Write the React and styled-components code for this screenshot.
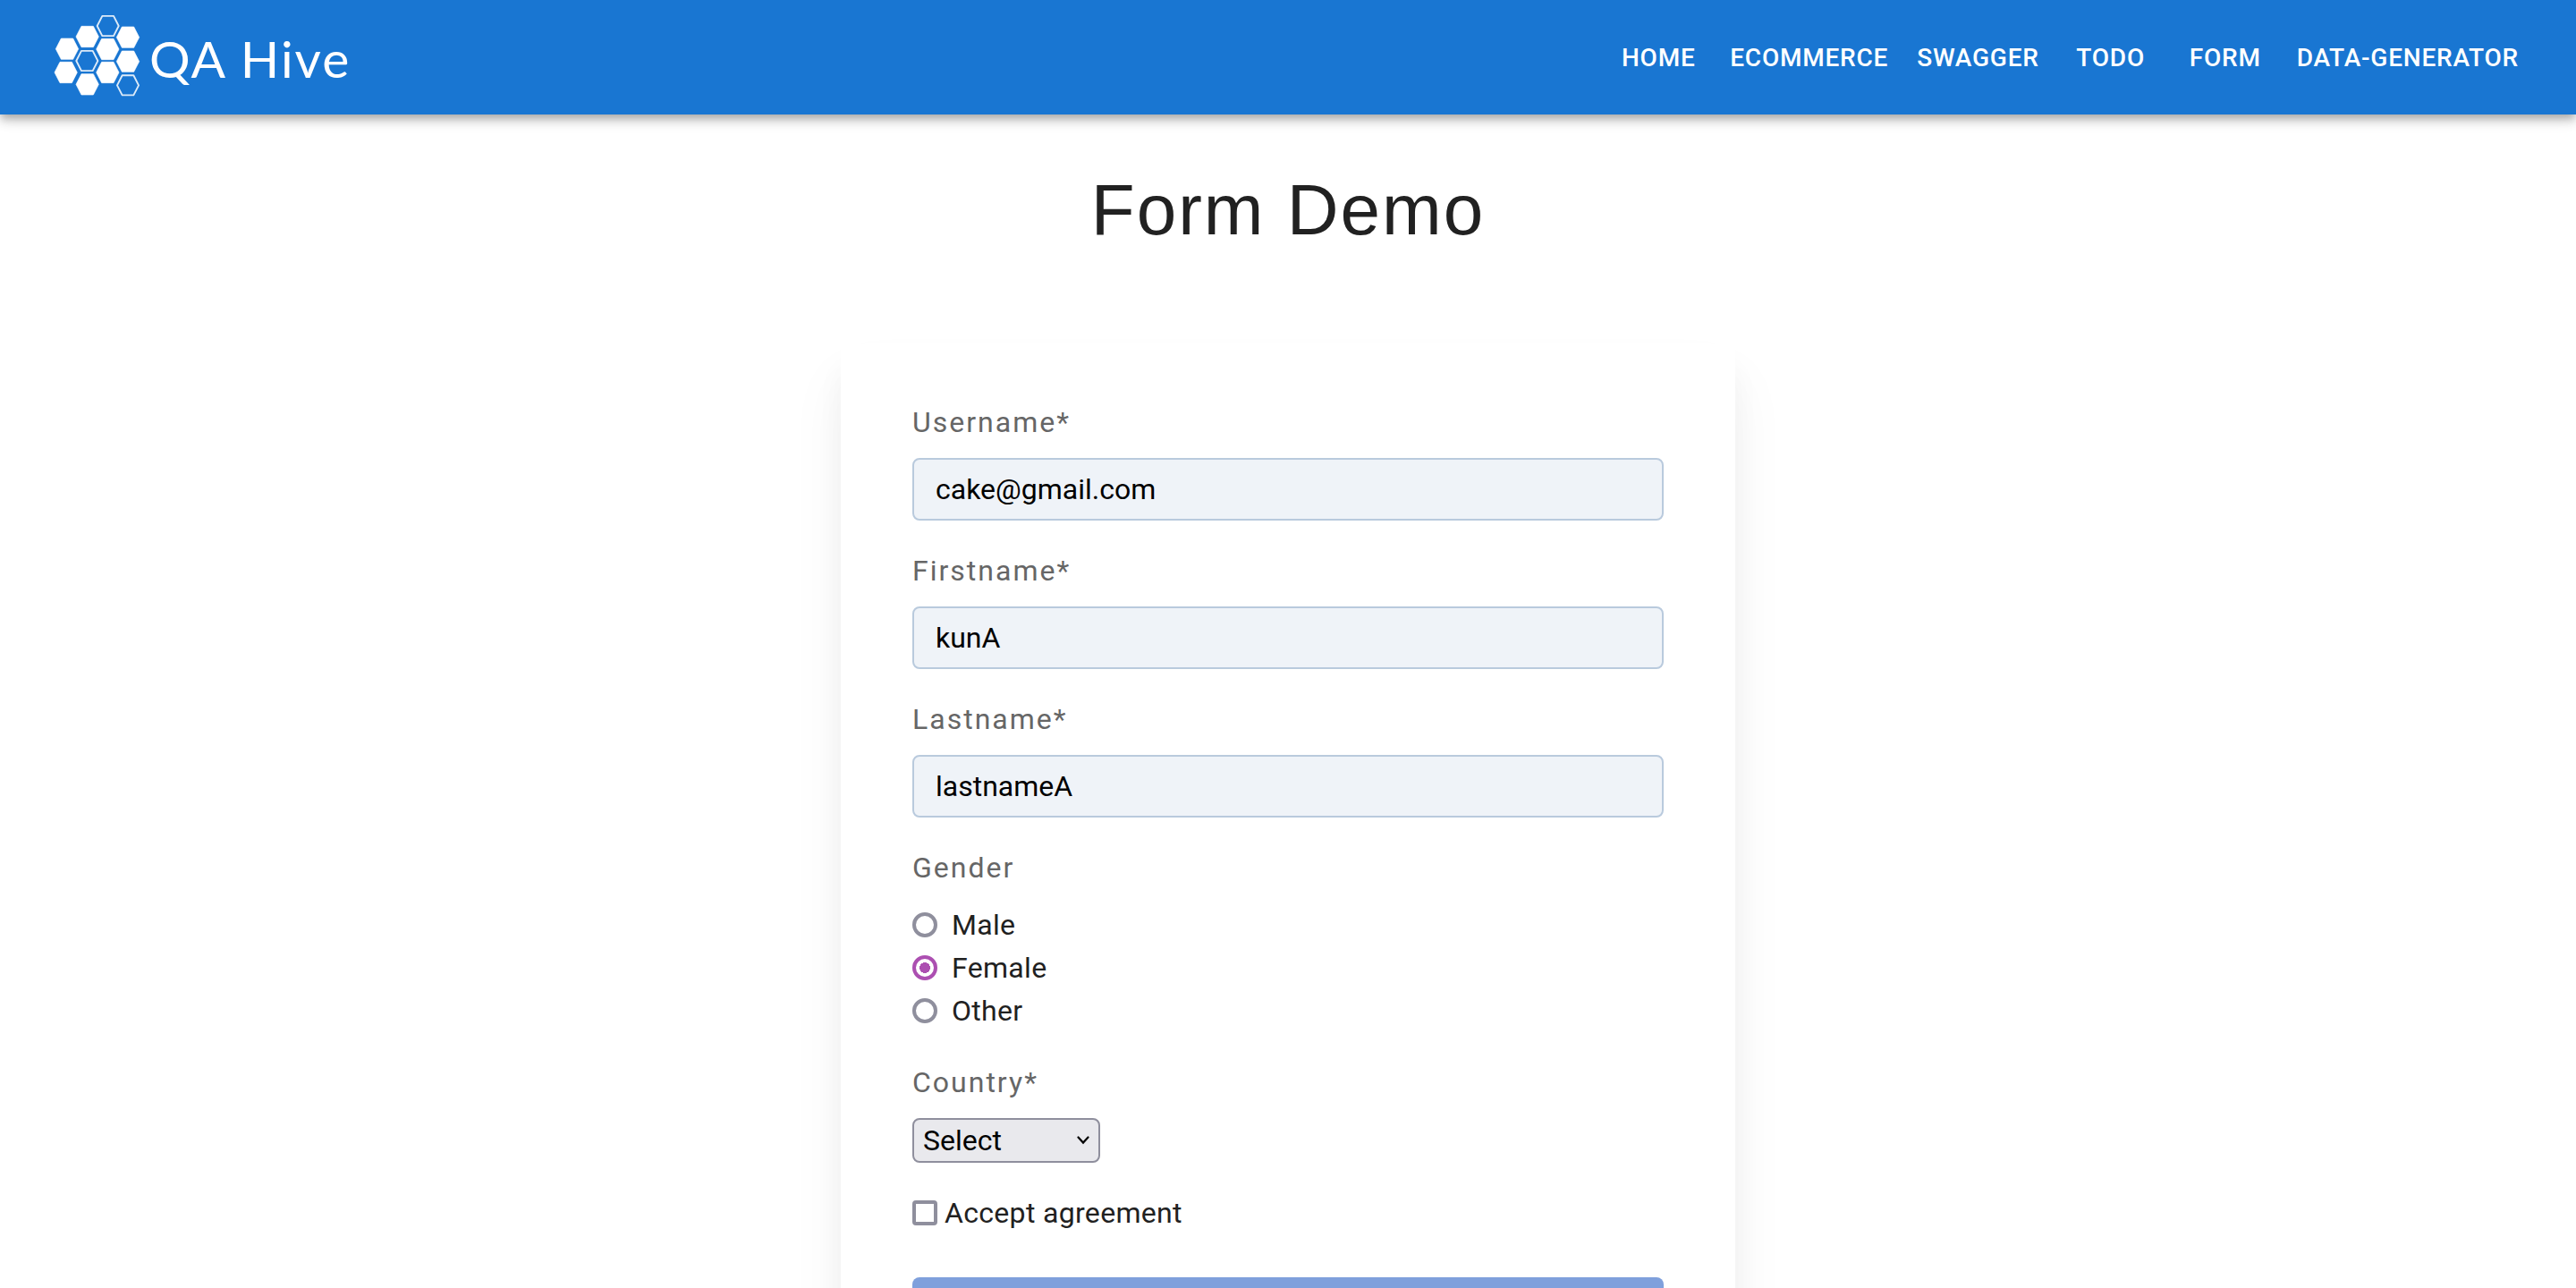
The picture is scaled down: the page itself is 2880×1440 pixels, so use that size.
import React, { useState } from "react";
import styled, { createGlobalStyle } from "styled-components";

const GlobalStyle = createGlobalStyle`
  *, *::before, *::after { box-sizing: border-box; }
  body {
    margin: 0;
    background: #fff;
    color: #212121;
    font-family: Roboto, "Liberation Sans", sans-serif;
    font-size: 32px;
    line-height: 48px;
  }
`;

const Page = styled.div`
  height: 100vh;
  overflow-y: auto;
  scrollbar-width: none;
`;

const Header = styled.header`
  display: flex;
  align-items: center;
  justify-content: space-between;
  height: 128px;
  padding: 0 48px 4px 60px;
  background: #1976d2;
  color: #fff;
  box-shadow:
    0 4px 8px -2px rgba(0, 0, 0, 0.2),
    0 8px 10px rgba(0, 0, 0, 0.14),
    0 2px 20px rgba(0, 0, 0, 0.12);
`;

const Brand = styled.a`
  display: flex;
  align-items: center;
  gap: 10px;
  color: inherit;
  text-decoration: none;
`;

const HiveIcon = styled.svg`
  display: block;
  width: 97px;
  height: 92px;
`;

const BrandName = styled.span`
  padding-top: 6px;
  font-family: Lato, sans-serif;
  font-size: 57px;
  line-height: 64px;
  letter-spacing: 2px;
`;

const Nav = styled.nav`
  display: flex;
  align-items: center;
  padding-top: 6px;
`;

const NavLink = styled.a`
  min-width: 128px;
  padding: 12px 16px;
  color: inherit;
  font-size: 28px;
  font-weight: 500;
  line-height: 48px;
  letter-spacing: 0.028em;
  text-align: center;
  text-decoration: none;
  text-transform: uppercase;
`;

const Title = styled.h1`
  margin: 56px 0 98px;
  font-family: "Liberation Sans", Arial, sans-serif;
  font-size: 80px;
  font-weight: 400;
  line-height: 102px;
  letter-spacing: 2px;
  text-align: center;
`;

const Card = styled.form`
  display: flex;
  flex-direction: column;
  gap: 34px;
  width: 100%;
  max-width: 1000px;
  margin: 0 auto;
  padding: 66px 80px 80px;
  background: #fff;
  box-shadow:
    0 30px 30px rgba(0, 0, 0, 0.04),
    0 40px 60px rgba(0, 0, 0, 0.05);
`;

const Field = styled.div`
  display: flex;
  flex-direction: column;
  align-items: flex-start;
  gap: 18px;
`;

const Group = styled.fieldset`
  min-width: 0;
  margin: 0;
  padding: 0;
  border: 0;
`;

const labelText = `
  color: #666;
  font-size: 32px;
  line-height: 44px;
  letter-spacing: 2px;
`;

const Label = styled.label`
  ${labelText}
`;

const Legend = styled.legend`
  ${labelText}
  padding: 0;
  margin-bottom: 18px;
`;

const TextInput = styled.input`
  width: 100%;
  height: 70px;
  padding: 0 24px;
  border: 2px solid #b9cadd;
  border-radius: 8px;
  background: #eff3f8;
  color: #000;
  font: inherit;
`;

const Option = styled.label`
  display: flex;
  align-items: center;
  gap: 16px;
  letter-spacing: 0.01em;
`;

const Agreement = styled(Option)`
  gap: 8px;
  line-height: 44px;
`;

const Radio = styled.input`
  appearance: none;
  width: 28px;
  height: 28px;
  margin: 0;
  border: 4px solid #8f8f9d;
  border-radius: 50%;
  background: #fff;

  &:checked {
    border-color: #ac4fb1;
    background: radial-gradient(circle, #ac4fb1 0 6px, #fff 6px);
  }
`;

const Checkbox = styled.input`
  appearance: none;
  width: 28px;
  height: 28px;
  margin: 0;
  border: 4px solid #8f8f9d;
  border-radius: 4px;
  background: #fff;

  &:checked {
    border-color: #ac4fb1;
    background: #ac4fb1;
  }
`;

const SelectBox = styled.div`
  display: grid;
  align-items: center;
  width: 210px;

  > * { grid-area: 1 / 1; }
`;

const Select = styled.select`
  appearance: none;
  width: 100%;
  height: 50px;
  padding: 0 40px 0 10px;
  border: 2px solid #8f8f9d;
  border-radius: 8px;
  background: #e9e9ed;
  color: #000;
  font: inherit;
  line-height: 46px;
`;

const Chevron = styled.svg`
  justify-self: end;
  width: 14px;
  height: 10px;
  margin-right: 12px;
  pointer-events: none;
`;

const Submit = styled.button`
  height: 88px;
  margin-top: 16px;
  border: 0;
  border-radius: 8px;
  background: #7fa0dc;
  color: #fff;
  font: inherit;
`;

const HEX = "M-38 0 L-20 -35 H20 L38 0 L20 35 H-20 Z";
const CELLS = [
  [105, 164], [173, 123], [309, 125], [241, 165],
  [309, 206], [101, 243], [173, 283], [241, 243],
];
const OPEN_CELLS = [[242, 87], [172, 204], [309, 286]];
const LINKS = ["Home", "Ecommerce", "Swagger", "Todo", "Form", "Data-Generator"];
const GENDERS = ["Male", "Female", "Other"];
const COUNTRIES = ["Select", "Canada", "France", "Thailand"];

function Hive() {
  return (
    <HiveIcon viewBox="60 48 291 276" aria-hidden="true">
      {CELLS.map(([x, y]) => (
        <path
          key={`${x}-${y}`}
          d={HEX}
          transform={`translate(${x} ${y})`}
          fill="#fff"
          stroke="#fff"
          strokeWidth="2"
          strokeLinejoin="round"
        />
      ))}
      {OPEN_CELLS.map(([x, y]) => (
        <path
          key={`${x}-${y}`}
          d={HEX}
          transform={`translate(${x} ${y}) scale(0.95)`}
          fill="none"
          stroke="#fff"
          strokeOpacity="0.85"
          strokeWidth="6"
          strokeLinejoin="round"
        />
      ))}
    </HiveIcon>
  );
}

function TextField({ id, label, initial }) {
  const [value, setValue] = useState(initial);
  return (
    <Field>
      <Label htmlFor={id}>{label}</Label>
      <TextInput id={id} value={value} onChange={(e) => setValue(e.target.value)} />
    </Field>
  );
}

export default function App() {
  return (
    <Page>
      <GlobalStyle />
      <Header>
        <Brand href="#">
          <Hive />
          <BrandName>QA Hive</BrandName>
        </Brand>
        <Nav>
          {LINKS.map((name) => (
            <NavLink key={name} href={`#${name.toLowerCase()}`}>{name}</NavLink>
          ))}
        </Nav>
      </Header>
      <main>
        <Title>Form Demo</Title>
        <Card onSubmit={(e) => e.preventDefault()}>
          <TextField id="username" label="Username*" initial="cake@gmail.com" />
          <TextField id="firstname" label="Firstname*" initial="kunA" />
          <TextField id="lastname" label="Lastname*" initial="lastnameA" />
          <Group>
            <Legend>Gender</Legend>
            {GENDERS.map((name) => (
              <Option key={name}>
                <Radio type="radio" name="gender" value={name} defaultChecked={name === "Female"} />
                {name}
              </Option>
            ))}
          </Group>
          <Field>
            <Label htmlFor="country">Country*</Label>
            <SelectBox>
              <Select id="country">
                {COUNTRIES.map((name) => <option key={name}>{name}</option>)}
              </Select>
              <Chevron viewBox="0 0 14 10" aria-hidden="true">
                <path d="M1.5 1.5 L7 7.5 L12.5 1.5" fill="none" stroke="#000" strokeWidth="2.2" strokeLinecap="round" />
              </Chevron>
            </SelectBox>
          </Field>
          <Agreement>
            <Checkbox type="checkbox" />
            Accept agreement
          </Agreement>
          <Submit type="submit">Submit</Submit>
        </Card>
      </main>
    </Page>
  );
}
